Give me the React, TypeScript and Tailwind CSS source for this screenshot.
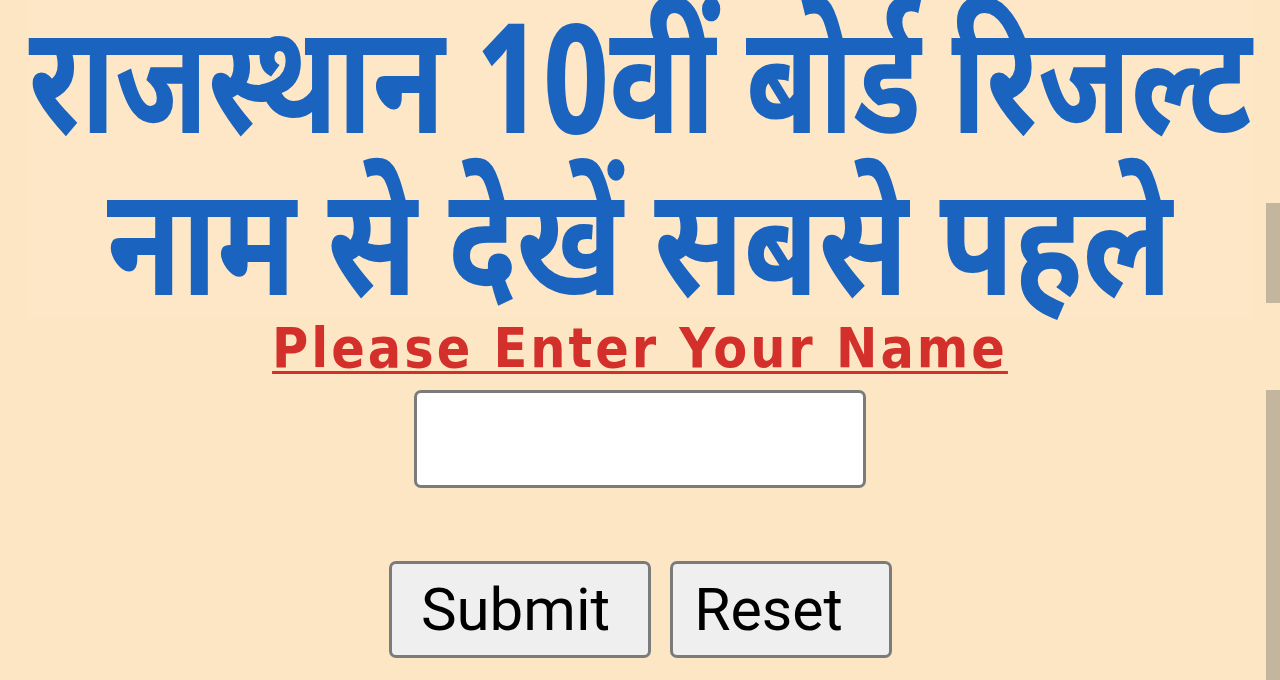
export default function App() {
  return (
    <div className="relative w-[1280px] h-[680px] overflow-hidden bg-[#fde6c3] flex flex-col items-center">
      <div className="absolute right-0 top-[203px] w-[14px] h-[100px] bg-[#c3b59e]" />
      <div className="absolute right-0 top-[390px] w-[14px] h-[290px] bg-[#c3b59e]" />

      <div
        className="w-[1225px] h-[318px] pt-[16px] bg-[#fee7c6] flex flex-col items-center text-[#1a63bf] font-bold text-[153px]"
        style={{ fontFamily: '"Noto Sans Devanagari", "Noto Sans", "DejaVu Sans", sans-serif' }}
      >
        <div className="h-[162px] leading-[160px] whitespace-nowrap flex justify-center">
          <span className="inline-block scale-x-[0.771]">राजस्थान 10वीं बोर्ड रिजल्ट</span>
        </div>
        <div className="h-[140px] leading-[160px] whitespace-nowrap flex justify-center">
          <span className="inline-block scale-x-[0.792]">नाम से देखें सबसे पहले</span>
        </div>
      </div>

      <p
        className="mt-[3px] text-[#d3302c] font-bold text-[55px] leading-[55px] tracking-[3px] underline decoration-[3px] underline-offset-[4px]"
        style={{ fontFamily: '"DejaVu Sans Condensed", "DejaVu Sans", sans-serif' }}
      >
        Please Enter Your Name
      </p>

      <input
        type="text"
        className="mt-[14px] w-[452px] h-[98px] bg-white border-[3px] border-[#7b7b7b] rounded-[7px]"
      />

      <div className="mt-[73px] flex gap-[19px]" style={{ fontFamily: 'Roboto, sans-serif' }}>
        <button className="w-[262px] h-[97px] pr-[8px] bg-[#efefef] border-[3px] border-[#7b7b7b] rounded-[7px] text-[60px] leading-none text-black">
          Submit
        </button>
        <button className="w-[222px] h-[97px] pr-[24px] bg-[#efefef] border-[3px] border-[#7b7b7b] rounded-[7px] text-[59px] leading-none text-black">
          Reset
        </button>
      </div>
    </div>
  );
}
